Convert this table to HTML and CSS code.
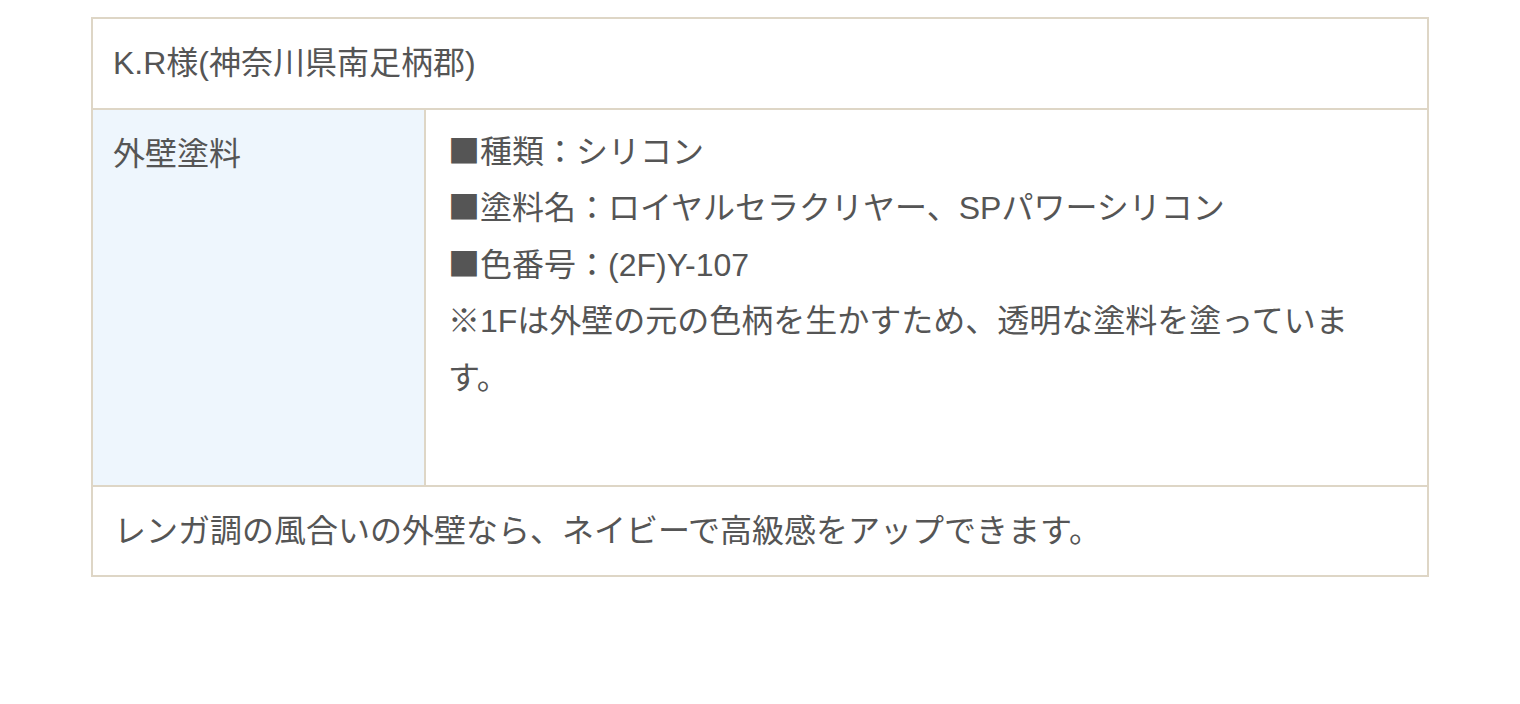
FILE: index.html
```html
<!DOCTYPE html>
<html lang="ja">
<head>
<meta charset="utf-8">
<title>施工事例</title>
<link rel="stylesheet" href="styles.css">
</head>
<body>
<div class="wrap">
  <table class="case">
    <colgroup>
      <col class="col-label">
      <col>
    </colgroup>
    <tr>
      <th class="head" colspan="2">K.R様(神奈川県南足柄郡)</th>
    </tr>
    <tr>
      <th class="label">外壁塗料</th>
      <td class="detail"><span class="mark">■</span>種類：シリコン<br><span class="mark">■</span>塗料名：ロイヤルセラクリヤー、SPパワーシリコン<br><span class="mark">■</span>色番号：(2F)Y-107<br>※1Fは外壁の元の色柄を生かすため、透明な塗料を塗っています。</td>
    </tr>
    <tr>
      <td class="foot" colspan="2">レンガ調の風合いの外壁なら、ネイビーで高級感をアップできます。</td>
    </tr>
  </table>
</div>
</body>
</html>
```
FILE: styles.css
```css
html, body {
  margin: 0;
  padding: 0;
  background: #fff;
}
body {
  font-family: "Liberation Sans", "Noto Sans CJK JP", sans-serif;
  color: #555;
  font-size: 32px;
  line-height: 56.5px;
}
.wrap {
  padding: 17px 91px 0;
}
.case {
  width: 100%;
  border-collapse: collapse;
  table-layout: fixed;
}
.col-label {
  width: 333px;
}
.case th, .case td {
  border: 2px solid #ded6c6;
  font-weight: normal;
  text-align: left;
  vertical-align: top;
}
.head {
  padding: 16px 20px;
  height: 56px;
}
.label {
  background: #eef6fd;
  padding: 16px 20px;
}
.detail {
  padding: 14px 24px 16px 22px;
  height: 345px;
}
.mark {
  font-family: "Noto Sans CJK JP", sans-serif;
  line-height: 1;
}
.foot {
  padding: 16px 21px;
  height: 55px;
}
```
